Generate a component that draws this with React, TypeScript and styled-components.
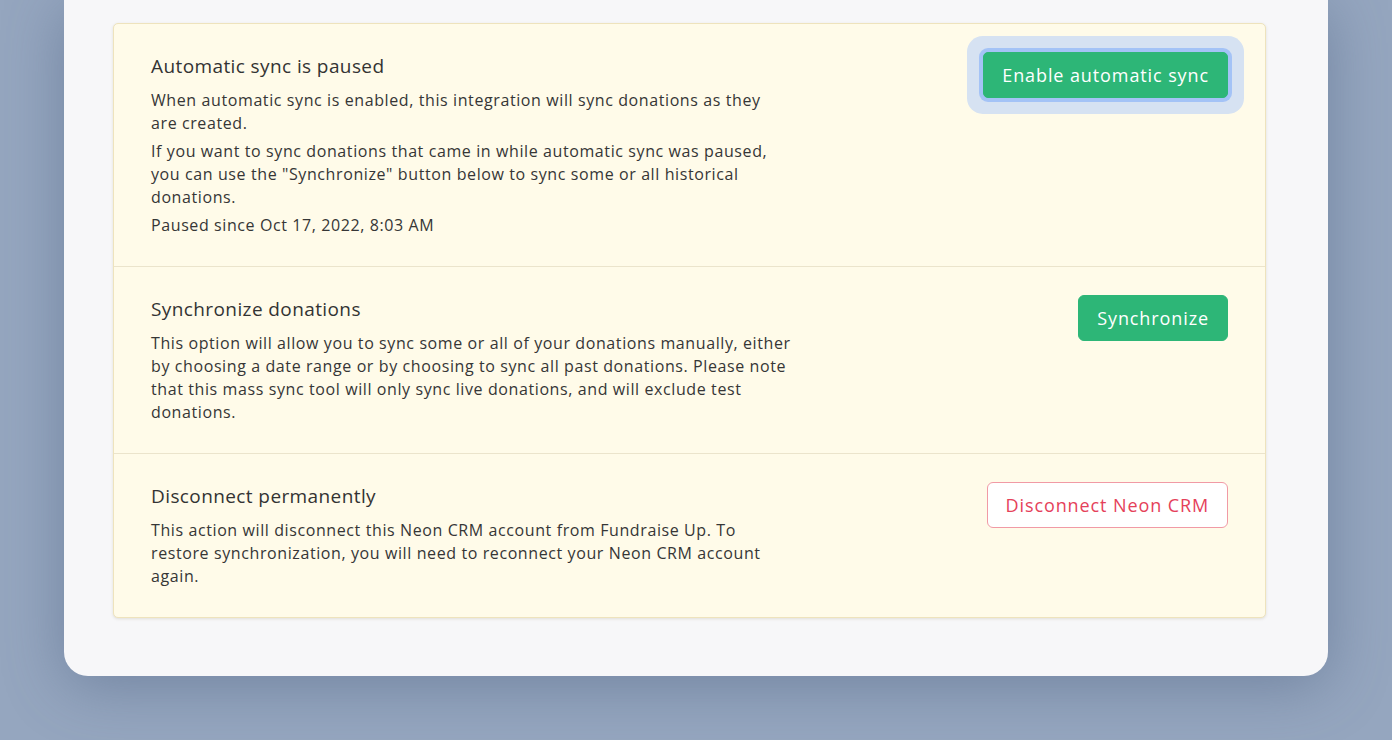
import * as React from 'react';
import styled, { createGlobalStyle } from 'styled-components';

const GlobalStyle = createGlobalStyle`
  html, body {
    margin: 0;
    padding: 0;
    background: #95a6bf;
    font-family: 'Open Sans', 'Liberation Sans', sans-serif;
  }
`;

const Page = styled.div`
  height: 740px;
  overflow: hidden;
  padding: 0 64px;
`;

const Panel = styled.div`
  background: #f7f7f9;
  border-radius: 0 0 24px 24px;
  padding: 23px 62px 58px 49px;
  box-shadow: 0 10px 60px rgba(70, 90, 125, 0.45);
`;

const Card = styled.div`
  background: #fffbe9;
  border: 1px solid #eee3bd;
  border-radius: 5px;
  box-shadow: 0 1px 3px rgba(120, 110, 70, 0.18);
`;

const Section = styled.section`
  display: flex;
  justify-content: space-between;
  align-items: flex-start;
  padding: 30px 37px 29px 37px;

  & + & {
    border-top: 1px solid #ebe4cc;
  }
`;

const Text = styled.div`
  max-width: 645px;
  color: #363636;
`;

const Title = styled.h3`
  margin: 0 0 11px;
  font-size: 19px;
  line-height: 24px;
  font-weight: 400;
  letter-spacing: 0.4px;
  color: #333;
`;

const Paragraph = styled.p`
  margin: 0;
  font-size: 16px;
  line-height: 23px;
  letter-spacing: 0.6px;

  & + & {
    margin-top: 5px;
  }
`;

const Button = styled.button<{ $variant: 'primary' | 'danger' }>`
  flex: none;
  margin-top: -2px;
  height: 46px;
  padding: 0 18px;
  border-radius: 6px;
  font-family: inherit;
  font-size: 18px;
  letter-spacing: 0.9px;
  cursor: pointer;
  background: ${(p) => (p.$variant === 'primary' ? '#2db677' : '#ffffff')};
  color: ${(p) => (p.$variant === 'primary' ? '#ffffff' : '#e5415a')};
  border: 1px solid ${(p) => (p.$variant === 'primary' ? '#2db677' : '#f19aa5')};
`;

const FocusButton = styled(Button)`
  border-radius: 5px;
  outline: none;
  box-shadow: 0 0 0 4px #a4c3f6, 0 0 0 16px #d6e2f2;
`;

export default function App() {
  return (
    <>
      <GlobalStyle />
      <Page>
        <Panel>
          <Card>
            <Section>
              <Text>
                <Title>Automatic sync is paused</Title>
                <Paragraph>
                  When automatic sync is enabled, this integration will sync donations as they
                  <br />
                  are created.
                </Paragraph>
                <Paragraph>
                  If you want to sync donations that came in while automatic sync was paused, you can use the
                  "Synchronize" button below to sync some or all historical donations.
                </Paragraph>
                <Paragraph>Paused since Oct 17, 2022, 8:03 AM</Paragraph>
              </Text>
              <FocusButton $variant="primary">Enable automatic sync</FocusButton>
            </Section>
            <Section>
              <Text>
                <Title>Synchronize donations</Title>
                <Paragraph>
                  This option will allow you to sync some or all of your donations manually, either by choosing a
                  date range or by choosing to sync all past donations. Please note that this mass sync tool will
                  only sync live donations, and will exclude test donations.
                </Paragraph>
              </Text>
              <Button $variant="primary">Synchronize</Button>
            </Section>
            <Section>
              <Text>
                <Title>Disconnect permanently</Title>
                <Paragraph>
                  This action will disconnect this Neon CRM account from Fundraise Up. To restore synchronization,
                  you will need to reconnect your Neon CRM account again.
                </Paragraph>
              </Text>
              <Button $variant="danger">Disconnect Neon CRM</Button>
            </Section>
          </Card>
        </Panel>
      </Page>
    </>
  );
}
